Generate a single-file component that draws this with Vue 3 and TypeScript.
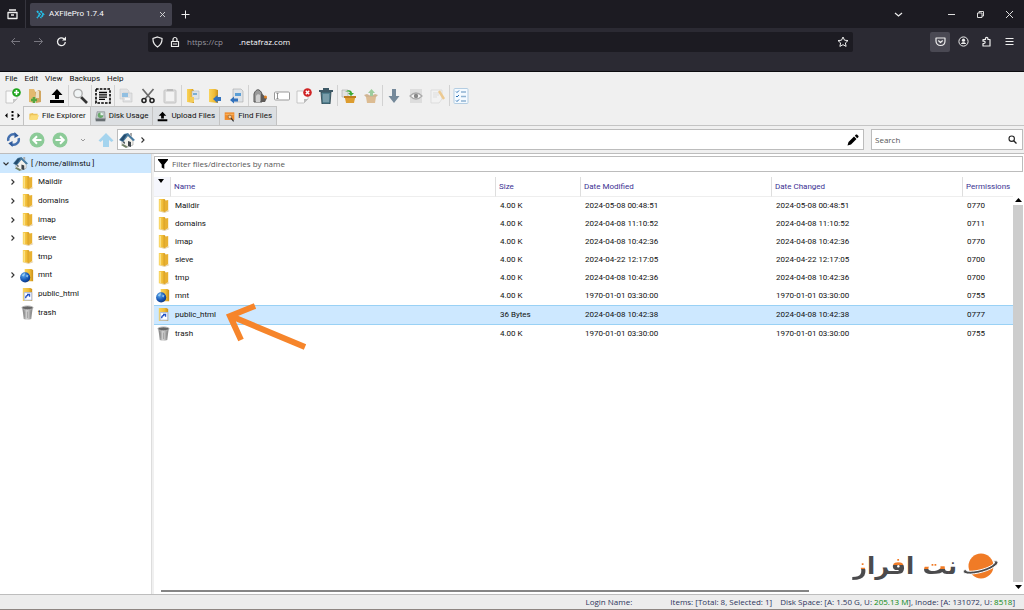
<script setup lang="ts">
interface Tool {
  icon: string
  label: string
  dim?: boolean
}
interface Entry {
  name: string
  icon: string
  size: string
  modified: string
  changed: string
  mode: string
  branch: boolean
}

const menus: string[] = ['File', 'Edit', 'View', 'Backups', 'Help']

const toolGroups: Tool[][] = [
  [
    { icon: 'new-file', label: 'New file' },
    { icon: 'new-folder', label: 'New folder' },
    { icon: 'upload', label: 'Upload' },
  ],
  [{ icon: 'magnifier', label: 'Find' }],
  [{ icon: 'select-all', label: 'Select all' }],
  [
    { icon: 'copy', label: 'Copy', dim: true },
    { icon: 'cut', label: 'Cut' },
    { icon: 'paste', label: 'Paste', dim: true },
  ],
  [
    { icon: 'copy-to', label: 'Copy to' },
    { icon: 'move-to', label: 'Move to' },
    { icon: 'duplicate', label: 'Duplicate' },
  ],
  [
    { icon: 'owner', label: 'Permissions' },
    { icon: 'rename', label: 'Rename' },
    { icon: 'delete', label: 'Delete' },
    { icon: 'bin', label: 'Move to trash' },
  ],
  [
    { icon: 'compress', label: 'Compress' },
    { icon: 'extract', label: 'Extract', dim: true },
  ],
  [
    { icon: 'download', label: 'Download' },
    { icon: 'eye', label: 'Preview', dim: true },
    { icon: 'edit', label: 'Edit file', dim: true },
  ],
  [{ icon: 'checklist', label: 'Properties' }],
]

const views = [
  { icon: 'open-folder', label: 'File Explorer', active: true },
  { icon: 'disk', label: 'Disk Usage', active: false },
  { icon: 'upload', label: 'Upload Files', active: false },
  { icon: 'find-files', label: 'Find Files', active: false },
]

const entries: Entry[] = [
  { name: 'Maildir', icon: 'folder', size: '4.00 K', modified: '2024-05-08 00:48:51', changed: '2024-05-08 00:48:51', mode: '0770', branch: true },
  { name: 'domains', icon: 'folder', size: '4.00 K', modified: '2024-04-08 11:10:52', changed: '2024-04-08 11:10:52', mode: '0711', branch: true },
  { name: 'imap', icon: 'folder', size: '4.00 K', modified: '2024-04-08 10:42:36', changed: '2024-04-08 10:42:36', mode: '0770', branch: true },
  { name: 'sieve', icon: 'folder', size: '4.00 K', modified: '2024-04-22 12:17:05', changed: '2024-04-22 12:17:05', mode: '0700', branch: true },
  { name: 'tmp', icon: 'folder', size: '4.00 K', modified: '2024-04-08 10:42:36', changed: '2024-04-08 10:42:36', mode: '0700', branch: false },
  { name: 'mnt', icon: 'globe-folder', size: '4.00 K', modified: '1970-01-01 03:30:00', changed: '1970-01-01 03:30:00', mode: '0755', branch: true },
  { name: 'public_html', icon: 'link-folder', size: '36 Bytes', modified: '2024-04-08 10:42:38', changed: '2024-04-08 10:42:38', mode: '0777', branch: false },
  { name: 'trash', icon: 'trash', size: '4.00 K', modified: '1970-01-01 03:30:00', changed: '1970-01-01 03:30:00', mode: '0755', branch: false },
]

const selected = 'public_html'
</script>

<template>
  <div class="window">
    <svg class="sprite" width="0" height="0" aria-hidden="true">
      <defs>
        <linearGradient id="gold" x1="0" x2="1">
          <stop offset="0" stop-color="#f9d45c" />
          <stop offset="0.6" stop-color="#f0bb35" />
          <stop offset="1" stop-color="#c9901a" />
        </linearGradient>
        <linearGradient id="steel" x1="0" x2="1">
          <stop offset="0" stop-color="#777" />
          <stop offset="0.45" stop-color="#d8d8d8" />
          <stop offset="1" stop-color="#7c7c7c" />
        </linearGradient>
        <radialGradient id="ocean" cx="0.35" cy="0.3" r="0.8">
          <stop offset="0" stop-color="#5aa9ee" />
          <stop offset="0.6" stop-color="#1757b5" />
          <stop offset="1" stop-color="#0b2f73" />
        </radialGradient>
      </defs>
      <symbol id="folder" viewBox="0 0 16 16">
        <path d="M3 1h6l1 1v13l-7-1z" fill="url(#gold)" />
        <path d="M9 3l4-1v11l-4 2z" fill="#e8b132" />
        <path d="M4 2h1v12l-1-.3z" fill="#fdeb9e" />
        <path d="M3 14l6 1 5-2v1l-5 2z" fill="#c9a45a" opacity=".5" />
      </symbol>
      <symbol id="globe-folder" viewBox="0 0 16 16">
        <path d="M5 1h7l2 1v12H5z" fill="url(#gold)" />
        <circle cx="5.500" cy="10" r="5.400" fill="url(#ocean)" />
        <path d="M2 8c1-2 2-2.500 3.500-2.500L5 7.500 3.500 9zM7 7l2 1-1 2-1.500-1z" fill="#a6d5f4" opacity=".8" />
      </symbol>
      <symbol id="link-folder" viewBox="0 0 16 16">
        <path d="M3 1h8l2 1v13H3z" fill="url(#gold)" />
        <path d="M4.500 6h8v8h-8z" fill="#fff" stroke="#a9bce6" />
        <path d="M6 12c0-2 1-3 3-3M7.500 7.800h2.700v2.700" fill="none" stroke="#2454c8" stroke-width="1.400" />
      </symbol>
      <symbol id="trash" viewBox="0 0 16 16">
        <path d="M2.500 3h11l-1.500 12q-4 1.500-8 0z" fill="url(#steel)" />
        <ellipse cx="8" cy="3" rx="6" ry="2" fill="#666" stroke="#b5b5b5" />
        <path d="M5 7v6M8 7v7M11 7v6" stroke="#888" stroke-width=".6" />
      </symbol>
      <symbol id="house" viewBox="0 0 16 16">
        <path d="M3 8l5-5 6 5v5l-5 2-6-3z" fill="#f3f2ed" stroke="#999" stroke-width=".6" />
        <path d="M0 8l5-6 4-1 7 7-2 1-5-5-5 6z" fill="#477a9f" />
        <path d="M1 8l4-5 3-1-4 7z" fill="#254c6d" />
        <path d="M9 9l3 1v5l-3-1z" fill="#3d454b" />
        <path d="M4 9l2 1v2l-2-1z" fill="#5b666d" />
        <path d="M11 1h2v4l-2-2z" fill="#a9a9a9" />
        <path d="M2 13l5 3 2-1-5-3z" fill="#718064" />
      </symbol>
      <symbol id="new-file" viewBox="0 0 16 16">
        <path d="M1 3h11v8l-4 4H1z" fill="#fafafa" stroke="#bbb" stroke-width=".8" />
        <path d="M8 15v-4h4z" fill="#c8c8c8" />
        <circle cx="11.500" cy="4.500" r="4.300" fill="#1fa51f" />
        <path d="M11.500 2v5M9 4.500h5" stroke="#fff" stroke-width="1.600" />
      </symbol>
      <symbol id="new-folder" viewBox="0 0 16 16">
        <path d="M2 1h5l1 2v12l-6-1z" fill="#e3b96f" />
        <path d="M8 4l4-2 2 1v11l-5 1z" fill="#d1a661" />
        <path d="M9 3h3v7H9z" fill="#eee0c6" />
        <path d="M7 9v6M4 12h6" stroke="#56a63f" stroke-width="2.600" />
      </symbol>
      <symbol id="upload" viewBox="0 0 16 16">
        <path d="M8 1l5.500 6H10v4H6V7H2.500zM1 12h14v3H1z" fill="#000" />
      </symbol>
      <symbol id="magnifier" viewBox="0 0 16 16">
        <path d="M9 9l6 6" stroke="#333" stroke-width="2.600" />
        <circle cx="6" cy="5.500" r="4.200" fill="#f0f4f5" stroke="#aaa" stroke-width="1.300" />
      </symbol>
      <symbol id="select-all" viewBox="0 0 16 16">
        <rect x="1" y="1" width="14" height="14" fill="none" stroke="#000" stroke-width="1.600" stroke-dasharray="2.600 1.200" />
        <path d="M4 4.500h8M4 6.800h8M4 9.100h8M4 11.400h6" stroke="#000" stroke-width="1.300" />
      </symbol>
      <symbol id="copy" viewBox="0 0 16 16">
        <path d="M2 1h7l2 2v8H2z" fill="#d3d6d9" stroke="#aaa" stroke-width=".6" />
        <path d="M5 5h9v9H5z" fill="#d3d6d9" stroke="#999" stroke-width=".6" />
        <path d="M4 5h6v4H4z" fill="#3590d4" />
        <path d="M7 10h5v2H7z" fill="#fff" />
      </symbol>
      <symbol id="cut" viewBox="0 0 16 16">
        <path d="M2.500 1L11 11M13.500 1L5 11" stroke="#6c6c6c" stroke-width="1.700" />
        <circle cx="4" cy="12.500" r="2" fill="none" stroke="#222" stroke-width="1.600" />
        <circle cx="12" cy="12.500" r="2" fill="none" stroke="#222" stroke-width="1.600" />
      </symbol>
      <symbol id="paste" viewBox="0 0 16 16">
        <rect x="2" y="2" width="12" height="13" rx="1" fill="#c8c8c8" stroke="#9a9a9a" />
        <path d="M4 4h8v9H4z" fill="#f6f6f6" />
        <path d="M5 1h6v2H5z" fill="#888" />
      </symbol>
      <symbol id="copy-to" viewBox="0 0 16 16">
        <path d="M2 1h6l1 2v12l-7-1z" fill="url(#gold)" />
        <path d="M7 3h7v8H7z" fill="#dfe4e8" stroke="#b0b8bf" stroke-width=".6" />
        <path d="M8 5h4v2H8z" fill="#7aaed4" />
        <path d="M5 9h4v5H5z" fill="#f3cc58" />
      </symbol>
      <symbol id="move-to" viewBox="0 0 16 16">
        <path d="M2 1h6l3 1v13l-9-1z" fill="url(#gold)" />
        <path d="M6 11l4.500-4v2H14v4h-3.500v2z" fill="#3272bd" />
      </symbol>
      <symbol id="duplicate" viewBox="0 0 16 16">
        <path d="M4 1h8l2 2v11H4z" fill="#dfe3e7" stroke="#aaa" stroke-width=".6" />
        <path d="M6 5h6v3H6z" fill="#5a9ed6" />
        <path d="M1 12l4-3.500v2h4v3H5v2z" fill="#3272bd" />
      </symbol>
      <symbol id="owner" viewBox="0 0 16 16">
        <path d="M2 6c1-3 3-5 5-4 2 1 3 3 3 5v7H2z" fill="#9a9a9a" stroke="#555" />
        <path d="M4 8c1-2 3-2 4-1v7H4z" fill="#d0d0d0" />
        <path d="M9 5l6 5-2 4H9z" fill="#5d5a58" />
        <circle cx="13.500" cy="9" r="1.500" fill="#e38426" />
      </symbol>
      <symbol id="rename" viewBox="0 0 16 16">
        <rect x=".5" y="4" width="15" height="8" rx="1" fill="#fff" stroke="#999" />
        <path d="M3.500 5.500v5M2.500 5.500h2M2.500 10.500h2" stroke="#777" stroke-width=".8" />
      </symbol>
      <symbol id="delete" viewBox="0 0 16 16">
        <path d="M1 3h11v8l-4 4H1z" fill="#fafafa" stroke="#bbb" stroke-width=".8" />
        <path d="M8 15v-4h4z" fill="#bbb" />
        <circle cx="11.500" cy="4.500" r="4.300" fill="#d02425" />
        <path d="M9.800 2.800l3.400 3.400m0-3.400L9.800 6.200" stroke="#fff" stroke-width="1.500" />
      </symbol>
      <symbol id="bin" viewBox="0 0 16 16">
        <path d="M3 4h10l-1 12H4z" fill="#53808f" stroke="#253b45" stroke-width=".8" />
        <path d="M1 2h14v2H1zM5 0h6v2H5z" fill="#3e5966" />
        <path d="M6 6v8M8 6v8M10 6v8" stroke="#a6c0c9" stroke-width=".9" />
      </symbol>
      <symbol id="compress" viewBox="0 0 16 16">
        <path d="M1 2h6v7H1z" fill="#e2e2e2" stroke="#aaa" stroke-width=".6" />
        <path d="M4 10h10l-1 5H5z" fill="#dd9d30" />
        <path d="M3 8h12v2H3z" fill="#c07d1e" />
        <path d="M4 4c3-3 7-2 7 1h2l-3 3-3-3h2c0-1-2-2-5-1z" fill="#3fab36" />
      </symbol>
      <symbol id="extract" viewBox="0 0 16 16">
        <path d="M3 9h10l-1 6H4z" fill="#c98a38" />
        <path d="M1 7l3-1 4 2 4-2 3 1-2 2H3z" fill="#b17937" />
        <path d="M7 8V5H5l3.500-4L12 5h-2v3z" fill="#4caa4c" />
      </symbol>
      <symbol id="download" viewBox="0 0 16 16">
        <path d="M6 1h4v7h3.500L8 15 2.500 8H6z" fill="#75899a" />
      </symbol>
      <symbol id="eye" viewBox="0 0 16 16">
        <path d="M2 1h12v14H2z" fill="#ccc" />
        <path d="M2 8q6-6 12 0-6 6-12 0z" fill="#fff" stroke="#666" stroke-width="1.200" />
        <circle cx="8" cy="8" r="2.200" fill="#222" />
      </symbol>
      <symbol id="edit" viewBox="0 0 16 16">
        <path d="M1 2h11v9l-3 4H1z" fill="#f5f5f5" stroke="#bbb" stroke-width=".7" />
        <path d="M3 5h6M3 7h6M3 9h4" stroke="#bbb" stroke-width=".7" />
        <path d="M9 3l5 8" stroke="#e9a435" stroke-width="2.400" />
      </symbol>
      <symbol id="checklist" viewBox="0 0 16 16">
        <rect x="1" y=".5" width="14" height="15" rx="1" fill="#f4faff" stroke="#b4cde2" />
        <path d="M3 3.500l1 1 2-2M3 8l1 1 2-2M3 12.500l1 1 2-2" fill="none" stroke="#2a6fb3" />
        <path d="M8 4h5M8 8.500h5M8 13h5" stroke="#8fb3d2" stroke-width="1.300" />
      </symbol>
      <symbol id="open-folder" viewBox="0 0 16 16">
        <path d="M2 4l5-1 1 1h6v8H2z" fill="#ecc35a" />
        <path d="M2 13l2-7h12l-3 7z" fill="#fbdc78" />
      </symbol>
      <symbol id="disk" viewBox="0 0 16 16">
        <path d="M3 1h11l1 11H1z" fill="#bfc5c8" stroke="#747a7d" stroke-width=".7" />
        <path d="M1 11h14v4H1z" fill="#686f73" />
        <circle cx="8" cy="6" r="4" fill="#68a86b" />
        <path d="M8 6V2a4 4 0 0 1 4 4z" fill="#e8eef0" />
      </symbol>
      <symbol id="find-files" viewBox="0 0 16 16">
        <path d="M1 2h14v11H1z" fill="#f08b2b" />
        <path d="M2 4h12v2H2z" fill="#f7ae58" />
        <path d="M10 10l4 5" stroke="#333" stroke-width="1.700" />
        <circle cx="8.500" cy="8.500" r="2.500" fill="#f8d3a8" stroke="#8b6641" />
      </symbol>
      <symbol id="refresh" viewBox="0 0 16 16">
        <path d="M2.500 9.500A5.600 5.600 0 0 1 9.500 2.700M13.500 6.500A5.600 5.600 0 0 1 6.500 13.300" fill="none" stroke="#4470ae" stroke-width="2.600" />
        <path d="M9 0l4.500 4L9 6.500zM7 16l-4.500-4L7 9.500z" fill="#2f5b9c" />
      </symbol>
      <symbol id="back" viewBox="0 0 16 16">
        <circle cx="8" cy="8" r="7.500" fill="#8ccb98" />
        <path d="M12.500 8h-8M8 4.300L4.300 8 8 11.700" fill="none" stroke="#fff" stroke-width="2" />
      </symbol>
      <symbol id="forward" viewBox="0 0 16 16">
        <circle cx="8" cy="8" r="7.500" fill="#8ccb98" />
        <path d="M3.500 8h8M8 4.300L11.700 8 8 11.700" fill="none" stroke="#fff" stroke-width="2" />
      </symbol>
      <symbol id="up" viewBox="0 0 16 16">
        <path d="M8 1l7.500 7.500L13.500 10 11 8v7H5V8l-2.500 2L.5 8.500z" fill="#a5d4ee" />
      </symbol>
      <symbol id="chevron" viewBox="0 0 8 8">
        <path d="M2.500 1.500L5 4 2.500 6.500" fill="none" stroke="#333" stroke-width="1.100" />
      </symbol>
    </svg>

    <header class="browser">
      <div class="tabstrip">
        <button class="archive" aria-label="Recent browsing">
          <svg width="11" height="11" viewBox="0 0 11 11"><path d="M2 1h7M1 3.500h9v6H1zM4 6h3" fill="none" stroke="#eee" stroke-width="1.300" stroke-linejoin="round" /></svg>
        </button>
        <div class="browser-tab">
          <svg width="9" height="9" viewBox="0 0 9 9"><path d="M1 1l3 3.500L1 8M4.500 1l3 3.500-3 3.500" fill="none" stroke="#25bfe8" stroke-width="1.800" stroke-dasharray="2.200 .5" /></svg>
          <span class="tab-title">AXFilePro 1.7.4</span>
          <button aria-label="Close tab">
            <svg width="7" height="7" viewBox="0 0 7 7"><path d="M1 1l5 5M6 1L1 6" stroke="#ddd" stroke-width=".9" /></svg>
          </button>
        </div>
        <button class="plus" aria-label="New tab">
          <svg width="9" height="9" viewBox="0 0 9 9"><path d="M4.500.5v8M.5 4.500h8" stroke="#eee" /></svg>
        </button>
        <div class="window-buttons">
          <button class="tab-list" aria-label="List all tabs"><svg width="9" height="9" viewBox="0 0 9 9"><path d="M1 3l3.500 3L8 3" fill="none" stroke="#eee" stroke-width="1.200" /></svg></button>
          <button aria-label="Minimize"><svg width="9" height="9" viewBox="0 0 9 9"><path d="M1 4.500h7" stroke="#ddd" /></svg></button>
          <button aria-label="Restore"><svg width="9" height="9" viewBox="0 0 9 9"><path d="M1.500 3h4.500v4.500H1.500zM3 3V1.500h4.500V6H6" fill="none" stroke="#ddd" /></svg></button>
          <button aria-label="Close window"><svg width="9" height="9" viewBox="0 0 9 9"><path d="M1 1l7 7M8 1L1 8" stroke="#ddd" /></svg></button>
        </div>
      </div>
      <div class="navbar">
        <div class="history">
          <button aria-label="Back"><svg width="11" height="11" viewBox="0 0 11 11"><path d="M10 5.500H1.500M5 2L1.500 5.500 5 9" fill="none" stroke="#77767f" /></svg></button>
          <button aria-label="Forward"><svg width="11" height="11" viewBox="0 0 11 11"><path d="M1 5.500h8.500M6 2l3.500 3.500L6 9" fill="none" stroke="#77767f" /></svg></button>
          <button aria-label="Reload"><svg width="11" height="11" viewBox="0 0 11 11"><path d="M9.300 6A3.900 3.900 0 1 1 8 2.800" fill="none" stroke="#f2f2f2" stroke-width="1.300" /><path d="M10 .5v4H6z" fill="#f2f2f2" /></svg></button>
        </div>
        <div class="urlbar">
          <svg width="11" height="12" viewBox="0 0 11 12"><path d="M5.500 1L10 2.500c.3 4-1.200 6.500-4.500 8.500C2.200 9 .7 6.500 1 2.500z" fill="none" stroke="#eee" stroke-width="1.200" /></svg>
          <svg width="10" height="12" viewBox="0 0 10 12"><path d="M3 5.500v-2a2 2 0 0 1 4 0v2M1.500 5.500h7v5h-7zM3 8h4" fill="none" stroke="#eee" stroke-width="1.200" stroke-linejoin="round" /></svg>
          <span class="url"><span class="scheme">https://cp</span><span>.netafraz.com</span></span>
          <button aria-label="Bookmark"><svg width="12" height="12" viewBox="0 0 12 12"><path d="M6 1l1.500 3.200 3.500.4-2.600 2.300.7 3.500L6 8.700l-3.100 1.700.7-3.500L1 4.600l3.500-.4z" fill="none" stroke="#eee" stroke-linejoin="round" /></svg></button>
        </div>
        <div class="extensions">
          <button class="pocket" aria-label="Save to Pocket"><svg width="11" height="11" viewBox="0 0 11 11"><path d="M1 2h9v3c0 6-9 6-9 0zM3.300 4.500l2.200 2 2.200-2" fill="none" stroke="#eee" stroke-width="1.200" stroke-linejoin="round" /></svg></button>
          <button aria-label="Account"><svg width="11" height="11" viewBox="0 0 11 11"><circle cx="5.500" cy="5.500" r="4.600" fill="none" stroke="#eee" /><circle cx="5.500" cy="4.200" r="1.600" fill="#eee" /><path d="M2.800 8c.8-2.500 4.600-2.500 5.400 0z" fill="#eee" /></svg></button>
          <button aria-label="Extensions"><svg width="11" height="11" viewBox="0 0 11 11"><path d="M2 10V7.500h1a1 1 0 0 0 0-2.300H2V3.500h2.500v-1a1.200 1.200 0 0 1 2.400 0v1H9V10z" fill="none" stroke="#eee" stroke-width="1.200" stroke-linejoin="round" /></svg></button>
          <button aria-label="Menu"><svg width="11" height="11" viewBox="0 0 11 11"><path d="M1.500 2.500h8M1.500 5.500h8M1.500 8.500h8" stroke="#eee" /></svg></button>
        </div>
      </div>
    </header>

    <nav class="menubar">
      <button v-for="m in menus" :key="m">{{ m }}</button>
    </nav>

    <div class="toolbar" role="toolbar">
      <div v-for="(group, g) in toolGroups" :key="g" class="tool-group">
        <button v-for="t in group" :key="t.icon" :class="{ dim: t.dim }" :aria-label="t.label">
          <svg width="16" height="16"><use :href="'#' + t.icon" /></svg>
        </button>
      </div>
    </div>

    <div class="views">
      <span class="view-scroll">
        <svg width="17" height="9" viewBox="0 0 17 9"><path d="M3.500 2v5L1 4.500zM13.500 2v5L16 4.500zM7.500 0h2v2h-2zM7.500 3.500h2v2h-2zM7.500 7h2v2h-2z" fill="#000" /></svg>
      </span>
      <button v-for="v in views" :key="v.label" :class="['view', { active: v.active }]">
        <svg width="11" height="11"><use :href="'#' + v.icon" /></svg>
        {{ v.label }}
      </button>
    </div>

    <div class="addressbar">
      <div class="moves">
        <button aria-label="Refresh"><svg width="15" height="15"><use href="#refresh" /></svg></button>
        <button aria-label="Previous folder"><svg width="16" height="16"><use href="#back" /></svg></button>
        <button aria-label="Next folder"><svg width="16" height="16"><use href="#forward" /></svg></button>
        <button aria-label="History"><svg width="8" height="8" viewBox="0 0 8 8"><path d="M2 3l2 2 2-2" fill="none" stroke="#999" /></svg></button>
        <button aria-label="Parent folder"><svg width="16" height="16"><use href="#up" /></svg></button>
      </div>
      <div class="path">
        <button aria-label="Home"><svg width="16" height="16"><use href="#house" /></svg></button>
        <svg width="8" height="8"><use href="#chevron" /></svg>
        <button class="pencil" aria-label="Edit path"><svg width="12" height="12" viewBox="0 0 12 12"><path d="M.5 11.500l1-3.500L7 2.500 9.500 5 4 10.500zM7.800 1.800l1.200-1.300h1L11.500 2v1l-1.300 1.200z" fill="#000" /></svg></button>
      </div>
      <label class="search">
        <input type="text" placeholder="Search" aria-label="Search" />
        <svg width="9" height="9" viewBox="0 0 9 9"><circle cx="3.700" cy="3.700" r="2.700" fill="none" stroke="#222" stroke-width="1.100" /><path d="M5.700 5.700l2.800 2.800" stroke="#222" stroke-width="1.300" /></svg>
      </label>
    </div>

    <main class="panes">
      <aside class="tree">
        <button class="root">
          <svg class="open" width="8" height="8"><use href="#chevron" /></svg>
          <svg width="15" height="15"><use href="#house" /></svg>
          <span>[ /home/aliimstu ]</span>
        </button>
        <ul>
          <li v-for="e in entries" :key="e.name">
            <span class="twist"><svg v-if="e.branch" width="8" height="8"><use href="#chevron" /></svg></span>
            <svg width="15" height="15"><use :href="'#' + e.icon" /></svg>
            <span>{{ e.name }}</span>
          </li>
        </ul>
      </aside>

      <section class="files">
        <label class="filter">
          <svg width="10" height="10" viewBox="0 0 10 10"><path d="M0 0h10v1L6.300 5.500V10L3.700 8.500v-3L0 1z" fill="#000" /></svg>
          <input type="text" placeholder="Filter files/directories by name" aria-label="Filter files/directories by name" />
        </label>
        <div class="listing">
          <table>
            <colgroup>
              <col class="c-icon" />
              <col />
              <col class="c-size" />
              <col class="c-date" />
              <col class="c-date" />
              <col class="c-mode" />
            </colgroup>
            <thead>
              <tr>
                <th class="sorter"><svg width="6" height="4" viewBox="0 0 6 4"><path d="M0 0h6L3 4z" fill="#000" /></svg></th>
                <th>Name</th>
                <th>Size</th>
                <th>Date Modified</th>
                <th>Date Changed</th>
                <th>Permissions</th>
              </tr>
            </thead>
            <tbody>
              <tr v-for="e in entries" :key="e.name" :class="{ selected: e.name === selected }">
                <td class="icon-cell"><svg width="15" height="15"><use :href="'#' + e.icon" /></svg></td>
                <td>{{ e.name }}</td>
                <td>{{ e.size }}</td>
                <td>{{ e.modified }}</td>
                <td>{{ e.changed }}</td>
                <td>{{ e.mode }}</td>
              </tr>
            </tbody>
          </table>
          <div class="scrollbar">
            <svg width="7" height="4" viewBox="0 0 7 4"><path d="M0 4h7L3.500 0z" fill="#000" /></svg>
            <span class="thumb"></span>
            <svg width="7" height="4" viewBox="0 0 7 4"><path d="M0 0h7L3.500 4z" fill="#000" /></svg>
          </div>
          <svg class="pointer" width="84" height="50" viewBox="0 0 84 50"><path d="M31 6L6 16l11 24M8 16.500L81 47" fill="none" stroke="#f6852b" stroke-width="6" /></svg>
          <div class="brand">
            <span class="brand-name" lang="fa" dir="rtl">ن<span class="dotted">ت</span> ا<span class="dotted high">ف</span>را<span class="dotted last">ز</span></span>
            <svg width="38" height="28" viewBox="0 0 38 28">
              <circle cx="19" cy="14" r="12.500" fill="#f07b26" />
              <path d="M31 9C37 8 38 11 32 15 24 20.500 8 23.500 3 21.500 0 20 1.500 18 4 17 3 19.500 7 19.500 12 19 20 18 28 15 31.500 12 33 10.500 33 9.500 31 9z" fill="#4b4b4d" stroke="#fff" />
            </svg>
          </div>
        </div>
        <div class="hscroll"><span></span></div>
      </section>
    </main>

    <footer class="status">
      <span class="login">Login Name:</span>
      <span class="items">Items: [Total: 8, Selected: 1]</span>
      <span>Disk Space: [A: 1.50 G, U: <b>205.13 M</b>], Inode: [A: 131072, U: <b>8518</b>]</span>
    </footer>
  </div>
</template>

<style>
body {
  margin: 0;
}
</style>

<style scoped>
.window {
  display: flex;
  flex-direction: column;
  min-height: 100vh;
  background: #f0f0f0;
  font-family: Roboto, "Noto Sans", sans-serif;
  font-size: 8px;
  line-height: 12px;
  color: #111;
}
.sprite {
  position: absolute;
}
svg {
  display: block;
  flex: none;
}
button {
  display: flex;
  align-items: center;
  justify-content: center;
  margin: 0;
  padding: 0;
  border: 0;
  background: none;
  font: inherit;
  color: inherit;
}
input {
  flex: 1;
  min-width: 0;
  margin: 0;
  padding: 0;
  border: 0;
  outline: 0;
  background: none;
  font: inherit;
}
input::placeholder {
  color: #555;
  opacity: 1;
}
.url,
.filter,
.search,
.status {
  font-family: "Open Sans", "Noto Sans", sans-serif;
}

.browser {
  background: #2b2a33;
  border-bottom: 1px solid #0b0b0f;
  color: #fbfbfe;
}
.tabstrip {
  display: flex;
  align-items: center;
  height: 28px;
  background: #1c1b22;
}
.archive {
  align-self: stretch;
  width: 26px;
  border-right: 1px solid #36353e;
}
.browser-tab {
  display: flex;
  align-items: center;
  gap: 4px;
  width: 142px;
  height: 23px;
  box-sizing: border-box;
  margin-left: 4px;
  padding: 0 6px;
  border-radius: 2px;
  background: #42414d;
}
.tab-title {
  flex: 1;
}
.plus {
  width: 27px;
  height: 28px;
}
.window-buttons {
  display: flex;
  margin-left: auto;
}
.window-buttons button {
  width: 29px;
  height: 28px;
}
.window-buttons .tab-list {
  margin-right: 24px;
}
.navbar {
  display: flex;
  align-items: center;
  height: 27px;
  padding-bottom: 16px;
}
.history {
  display: flex;
  width: 148px;
  padding-left: 4px;
  box-sizing: border-box;
}
.history button {
  width: 23px;
  height: 20px;
}
.urlbar {
  display: flex;
  align-items: center;
  gap: 7px;
  flex: 1;
  height: 20px;
  padding: 0 4px;
  border-radius: 2px;
  background: #1c1b22;
}
.url {
  display: flex;
  gap: 16px;
  flex: 1;
}
.scheme {
  color: #97969f;
}
.extensions {
  display: flex;
  gap: 3px;
  margin-left: 77px;
  padding-right: 5px;
}
.extensions button {
  width: 20px;
  height: 20px;
}
.extensions .pocket {
  border-radius: 2px;
  background: #4a4953;
}

.menubar {
  display: flex;
  gap: 7px;
  padding: 1px 5px 0;
}
.toolbar {
  display: flex;
  height: 21px;
  padding: 0 2px;
}
.tool-group {
  display: flex;
  align-items: center;
}
.tool-group + .tool-group {
  border-left: 1px solid #d2d2d2;
}
.tool-group button {
  width: 22px;
}
.dim {
  opacity: 0.5;
}
.views {
  display: flex;
  height: 19px;
  border-bottom: 1px solid #c4c4c4;
}
.view-scroll {
  display: flex;
  align-items: center;
  width: 19px;
  padding-left: 4px;
}
.view {
  gap: 3px;
  padding: 0 4px;
  border: 1px solid #c3c3c3;
  border-width: 1px 1px 0 0;
  background: #dcdfe2;
}
.view.active {
  border-left-width: 1px;
  background: #f4f4f4;
}
.addressbar {
  display: flex;
  align-items: center;
  gap: 7px;
  height: 27px;
  padding-right: 1px;
  border-bottom: 1px solid #bdbdbd;
}
.moves {
  display: flex;
  width: 110px;
  padding-left: 2px;
  box-sizing: border-box;
}
.moves button {
  width: 23px;
  flex: none;
}
.path,
.search {
  display: flex;
  align-items: center;
  height: 21px;
  border: 1px solid #bcbcbc;
  background: #fff;
  box-sizing: border-box;
}
.path {
  flex: 1;
  gap: 4px;
  padding: 0 4px 0 1px;
}
.pencil {
  margin-left: auto;
}
.search {
  width: 152px;
  padding: 0 5px 0 3px;
}

.panes {
  display: flex;
  flex: 1;
}
.tree {
  width: 152px;
  background: #fff;
  border-right: 1px solid #ddd;
  box-sizing: border-box;
}
.root {
  gap: 3px;
  width: 100%;
  height: 19px;
  justify-content: flex-start;
  padding-left: 2px;
  background: #cde8ff;
}
.open {
  transform: rotate(90deg);
}
.tree ul {
  display: grid;
  grid-auto-rows: 1fr;
  height: 149px;
  margin: 0;
  padding: 0;
  list-style: none;
}
.tree li {
  display: flex;
  align-items: center;
  gap: 3px;
  padding-left: 9px;
}
.twist {
  width: 8px;
}
.files {
  display: flex;
  flex-direction: column;
  flex: 1;
  min-width: 0;
  margin-left: 2px;
  background: #fff;
}
.filter {
  display: flex;
  align-items: center;
  gap: 4px;
  height: 16px;
  margin: 2px 1px 5px 0;
  padding: 0 3px;
  border: 1px solid #bcbcbc;
  box-sizing: border-box;
}
.listing {
  position: relative;
  display: flex;
  flex: 1;
  align-items: flex-start;
}
table {
  flex: 1;
  height: 166px;
  table-layout: fixed;
  border-collapse: separate;
  border-spacing: 0;
}
.c-icon {
  width: 16px;
}
.c-size {
  width: 85px;
}
.c-date {
  width: 191px;
}
.c-mode {
  width: 50px;
}
th {
  height: 20px;
  padding: 0 0 0 3px;
  border-right: 1px solid #dedede;
  border-bottom: 1px solid #eee;
  box-sizing: border-box;
  font-weight: 400;
  text-align: left;
  color: #3b3192;
}
th:last-child {
  border-right: 0;
}
th.sorter {
  padding: 2px 0 0 4px;
  vertical-align: top;
  background: #f5f6fc;
}
td {
  padding: 0 0 0 4px;
  border: 0 solid #99d1f5;
  white-space: nowrap;
}
td.icon-cell {
  padding: 0 0 0 2px;
}
.selected td {
  border-width: 1px 0;
  background: #cde8ff;
}
.scrollbar {
  display: flex;
  flex-direction: column;
  align-items: center;
  align-self: stretch;
  gap: 3px;
  width: 11px;
  margin-top: 21px;
  padding-bottom: 1px;
}
.thumb {
  flex: 1;
  align-self: stretch;
  background: #cdcdcd;
  margin-right: 1px;
}
.pointer {
  position: absolute;
  left: 70px;
  top: 123px;
}
.brand {
  position: absolute;
  right: 24px;
  bottom: 8px;
  display: flex;
  align-items: center;
  gap: 5px;
}
.brand-name {
  font: bold 24px/32px "DejaVu Sans", sans-serif;
  color: #4b4b4d;
}
.dotted {
  background: linear-gradient(#f07b26 17px, #4b4b4d 17px);
  background-clip: text;
  color: transparent;
}
.dotted.high {
  background-image: linear-gradient(#f07b26 13px, #4b4b4d 13px);
}
.dotted.last {
  padding-left: 3px;
}
.hscroll {
  display: flex;
  height: 4px;
  padding: 0 215px 0 7px;
}
.hscroll span {
  flex: 1;
  height: 2px;
  background: #858585;
}
.status {
  display: flex;
  justify-content: flex-end;
  height: 14px;
  padding-right: 9px;
  border-top: 1px solid #bdbdbd;
  border-bottom: 1px solid #8d8581;
  background: #ececec;
  line-height: 14px;
  color: #2d355c;
}
.login {
  margin-right: 38px;
}
.items {
  margin-right: 8px;
}
.status b {
  font-weight: 400;
  color: #098a12;
}
</style>
